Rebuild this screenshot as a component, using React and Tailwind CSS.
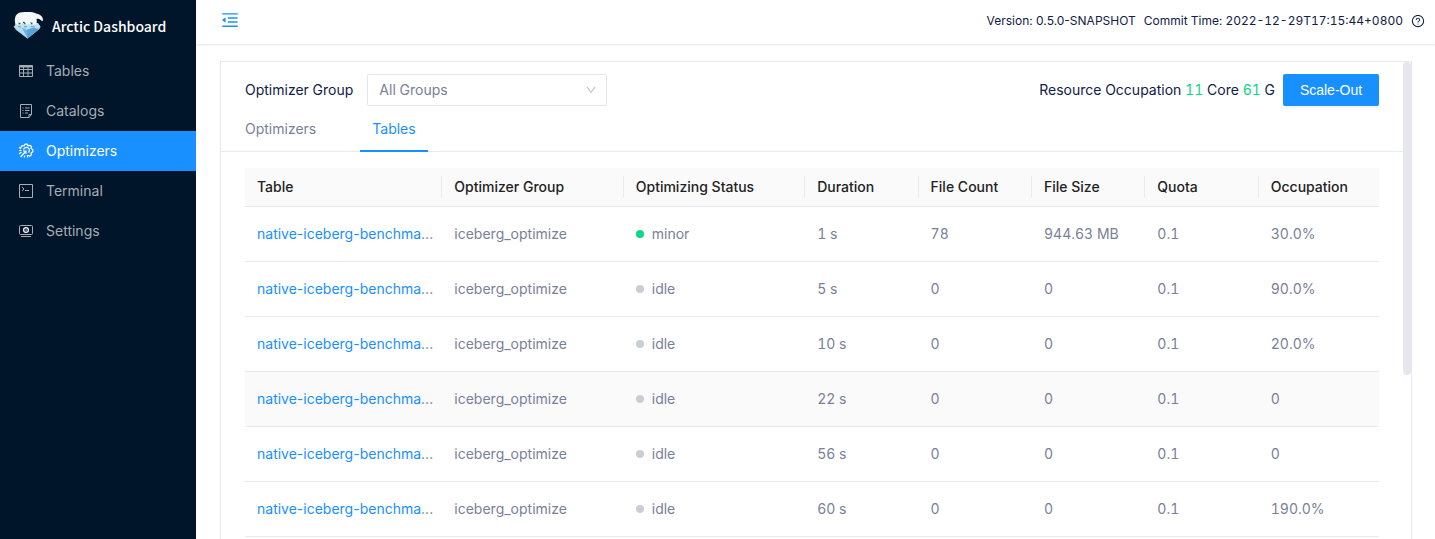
import { AiOutlineMenuFold, AiOutlineQuestionCircle, AiOutlineDown } from "react-icons/ai";

function BearLogo() {
  return (
    <svg width="32" height="30" viewBox="0 1 32 30" aria-hidden="true">
      <path d="M2 17 4 13l22 0 2.500 4-1 2-12 9.500L4 20Z" fill="#a9d6ee" />
      <path d="m4 19 11.500 9.500L27 19l-7-1-5 2-5-2Z" fill="#6fb4dc" />
      <path d="m15 20 5-2 7 1-11.500 9.500Z" fill="#5ba3d2" />
      <path d="m4 19 6-1 5.500 10.500Z" fill="#b5def2" />
      <path d="M1.500 17 6 13.500l20 0 2.500 3-3.500 2-4-1.500-5 2-5-1.500-5 1.500-4-2Z" fill="#bfe0f1" />
      <path
        d="M3.500 14.500C2 9 3 4 8 2.500c3-1 6-.5 9-.5 4-.5 6 1.200 9 2 3 .8 5 3.500 5 6 0 1-1 1.300-1.800.5-1.500-1.500-3.200-2-4.700-1.500.5 2 .5 3.500-.5 5.500h-4l-1-2.500-1.500 2.500h-4l-1.500-3-2.500 3Z"
        fill="#f4f7f8"
      />
      <path d="M6.500 13.500h2M12 13.500h1.500M19 13.500h1.500" stroke="#35607a" strokeWidth="1.500" />
      <path d="M6 16.500l3 .500M12 17l3-.500M19 16.500l4 .500" stroke="#6c9dbb" />
    </svg>
  );
}

const iconProps = {
  width: 16,
  height: 16,
  viewBox: "0 0 16 16",
  fill: "none",
  stroke: "currentColor",
  "aria-hidden": true,
};

function TablesIcon() {
  return (
    <svg {...iconProps}>
      <path d="M1.500 2.500h13v11h-13zM1.500 6.500h13M1.500 10h13M5.500 4v9.500M10 4v9.500" />
      <path d="M1.500 3.500h13" strokeWidth="2" />
    </svg>
  );
}

function CatalogsIcon() {
  return (
    <svg {...iconProps}>
      <path d="M2.500 1.500h11v10l-2.500 3H2.500zM13.500 11.500H11v3" />
      <path d="M4.500 5h1M7 5h4.500M4.500 7.500h1M7 7.500h4.500M4.500 10h1M7 10h3" />
    </svg>
  );
}

function OptimizersIcon() {
  return (
    <svg {...iconProps} strokeWidth="1.200" strokeLinejoin="round">
      <path d="M3 6 1.500 4.500 3.500 4 4 2.500 6 3 7 1.200h2.200L10 3l2-.800 1.500 1.300-.500 2 1.800 1V9L13 9.800l.500 2-1.800 1.500-1.700-.800" />
      <path d="M5.500 6.500A3 3 0 1 1 10.500 9.500M1 7.500h2.500M1 11l2.500-2M2.500 14 8 8M5 8h3v3M6 14.500l1-2M9.500 12v2.500" />
    </svg>
  );
}

function TerminalIcon() {
  return (
    <svg {...iconProps}>
      <path d="M1.500 1.500h13v13h-13zM4 4l2 2-2 2M7 7.500h4" />
    </svg>
  );
}

function SettingsIcon() {
  return (
    <svg {...iconProps}>
      <rect x="1.500" y="2.500" width="13" height="9" rx="1" />
      <circle cx="8" cy="7" r="2.400" strokeWidth="1.200" stroke="#fff" />
      <circle cx="8" cy="7" r=".7" fill="#fff" stroke="none" />
      <path d="M3 13.500h10" />
    </svg>
  );
}

const navItems = [
  { label: "Tables", Icon: TablesIcon },
  { label: "Catalogs", Icon: CatalogsIcon },
  { label: "Optimizers", Icon: OptimizersIcon, active: true },
  { label: "Terminal", Icon: TerminalIcon },
  { label: "Settings", Icon: SettingsIcon },
];

const columns = [
  { label: "Table", width: "w-[17.4%]" },
  { label: "Optimizer Group", width: "w-[16%]" },
  { label: "Optimizing Status", width: "w-[16%]" },
  { label: "Duration", width: "w-[10%]" },
  { label: "File Count", width: "w-[10%]" },
  { label: "File Size", width: "w-[10%]" },
  { label: "Quota", width: "w-[10%]" },
  { label: "Occupation", width: "w-[10.6%]" },
];

const rows = [
  { status: "minor", cells: ["1 s", "78", "944.63 MB", "0.1", "30.0%"] },
  { status: "idle", cells: ["5 s", "0", "0", "0.1", "90.0%"] },
  { status: "idle", cells: ["10 s", "0", "0", "0.1", "20.0%"] },
  { status: "idle", cells: ["22 s", "0", "0", "0.1", "0"], hovered: true },
  { status: "idle", cells: ["56 s", "0", "0", "0.1", "0"] },
  { status: "idle", cells: ["60 s", "0", "0", "0.1", "190.0%"] },
];

function Sidebar() {
  return (
    <aside className="w-[196px] shrink-0 bg-[#001529]">
      <div className="flex h-[51px] items-center gap-2 pl-3">
        <BearLogo />
        <span className="font-['Noto_Sans_CJK_SC',sans-serif] text-sm font-medium text-white">
          Arctic Dashboard
        </span>
      </div>
      <nav>
        {navItems.map(({ label, Icon, active }) => (
          <a
            key={label}
            href={"#" + label.toLowerCase()}
            className={
              "flex h-10 items-center gap-3 pl-[18px] text-sm " +
              (active ? "bg-[#1890ff] text-white" : "text-[#a6adb4]")
            }
          >
            <Icon />
            {label}
          </a>
        ))}
      </nav>
    </aside>
  );
}

function TopBar() {
  return (
    <header className="flex h-11 shrink-0 items-center justify-between bg-white pr-[10px] pb-1 pl-6 shadow-[0_1px_2px_rgba(0,21,41,0.12)]">
      <button type="button" aria-label="Collapse menu" className="text-[#1890ff]">
        <AiOutlineMenuFold size={20} />
      </button>
      <div className="flex items-center gap-2 pt-0.5 text-xs text-[#102048]">
        <span className="normal-nums">Version: 0.5.0-SNAPSHOT</span>
        <span>Commit Time: 2022-12-29T17:15:44+0800</span>
        <button type="button" aria-label="Help">
          <AiOutlineQuestionCircle size={14} />
        </button>
      </div>
    </header>
  );
}

function Toolbar() {
  return (
    <div className="flex items-center justify-between px-6 pt-3">
      <div className="flex items-center gap-[14px]">
        <label htmlFor="group">Optimizer Group</label>
        <div className="relative w-60">
          <select
            id="group"
            className="h-8 w-full appearance-none rounded-xs border border-[#e5e5ef] bg-white px-[11px] text-[#79809a]"
          >
            <option>All Groups</option>
          </select>
          <AiOutlineDown
            size={12}
            className="pointer-events-none absolute top-[10px] right-[10px] text-[#b8b8b8]"
          />
        </div>
      </div>
      <div className="flex items-center gap-2">
        <span>
          Resource Occupation <span className="text-[#0ad787]">11</span> Core{" "}
          <span className="text-[#0ad787]">61</span> G
        </span>
        <button
          type="button"
          className="h-8 w-24 rounded-xs bg-[#1890ff] font-['Liberation_Sans',sans-serif] text-sm text-white shadow-[0_2px_0_rgba(0,0,0,0.04)]"
        >
          Scale-Out
        </button>
      </div>
    </div>
  );
}

function OptimizingTable() {
  return (
    <table className="w-full table-fixed border-collapse text-left">
      <thead>
        <tr className="h-[38px] border-b border-[#e8e8f0] bg-[#fafafa] text-[#222]">
          {columns.map(({ label, width }, i) => (
            <th key={label} scope="col" className={width + " p-0 font-medium"}>
              <div
                className={
                  "flex h-[22px] items-center pl-3 whitespace-nowrap " +
                  (i < columns.length - 1 ? "border-r border-[#ececec]" : "")
                }
              >
                {label}
              </div>
            </th>
          ))}
        </tr>
      </thead>
      <tbody>
        {rows.map(({ status, cells, hovered }, i) => (
          <tr
            key={i}
            className={"h-[55px] border-b border-[#e8e8f0] " + (hovered ? "bg-[#fafafa]" : "")}
          >
            <td className="pl-3 whitespace-nowrap normal-nums">
              <a href="#table" className="text-[#1890ff]">
                native-iceberg-benchma
              </a>
              ...
            </td>
            <td className="px-3">iceberg_optimize</td>
            <td className="px-3">
              <span className="flex items-center gap-2">
                <span
                  className={
                    "size-2 rounded-full " + (status === "minor" ? "bg-[#0ad787]" : "bg-[#c9cdd4]")
                  }
                />
                {status}
              </span>
            </td>
            {cells.map((value, j) => (
              <td key={j} className="px-3 whitespace-nowrap">
                {value}
              </td>
            ))}
          </tr>
        ))}
      </tbody>
    </table>
  );
}

export default function App() {
  return (
    <div className="flex h-screen overflow-hidden bg-white font-['Inter',sans-serif] text-sm text-[#79809a] tabular-nums">
      <Sidebar />
      <div className="flex min-w-0 flex-1 flex-col">
        <TopBar />
        <main className="min-h-0 flex-1 overflow-hidden pt-[17px] pr-[23px] pl-6">
          <section className="relative h-full overflow-hidden border border-b-0 border-[#e8e8ee] pr-2">
            <div className="text-[#102048]">
              <Toolbar />
            </div>
            <div role="tablist" className="-mr-2 flex gap-8 border-b border-[#e8e8f0] px-3">
              <button type="button" role="tab" aria-selected="false" className="h-[45px] px-3">
                Optimizers
              </button>
              <button
                type="button"
                role="tab"
                aria-selected="true"
                className="-mb-px h-[46px] border-b-2 border-[#1890ff] px-3 pt-0.5 text-[#1890ff]"
              >
                Tables
              </button>
            </div>
            <div className="px-6 pt-4">
              <OptimizingTable />
            </div>
            <div className="absolute top-0 right-0 h-[313px] w-2 rounded-full bg-[#e5e6ee]" />
          </section>
        </main>
      </div>
    </div>
  );
}
